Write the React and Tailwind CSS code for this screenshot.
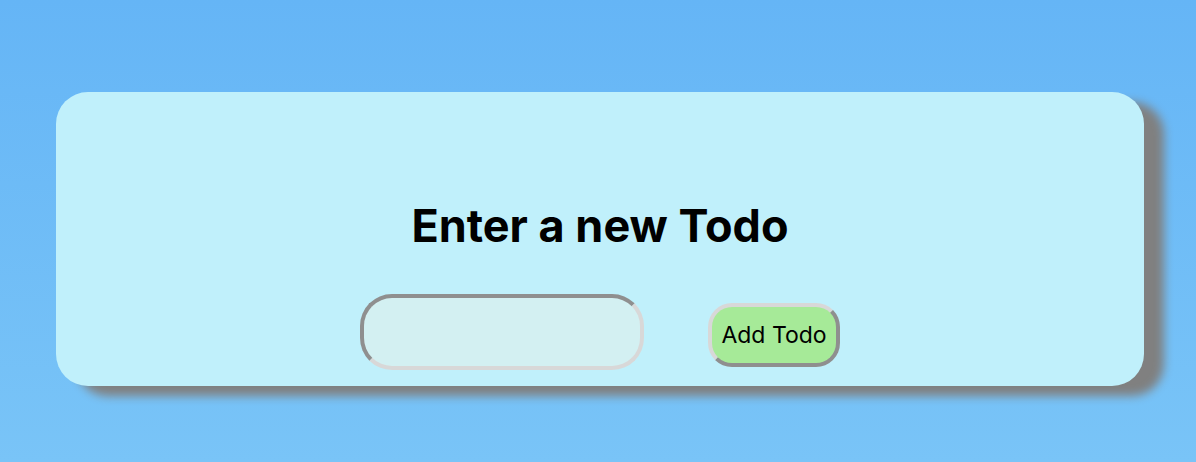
import { useState } from "react";

export default function App() {
  const [text, setText] = useState("");
  return (
    <main className="min-h-screen bg-linear-to-b from-[#65b5f6] to-[#79c4f7] pt-[92px] pr-[52px] pb-[76px] pl-14 font-['Inter',sans-serif] text-black">
      <section className="flex flex-col items-center rounded-[32px] bg-[#c0f0fb] pt-[106px] pb-4 shadow-[20px_10px_10px_#808080]">
        <h1 className="text-[45px] leading-[56px] font-bold">Enter a new Todo</h1>
        <form className="mt-10 flex items-center gap-16" onSubmit={(e) => e.preventDefault()}>
          <input
            aria-label="New todo"
            value={text}
            onChange={(e) => setText(e.target.value)}
            className="h-[76px] w-[284px] rounded-[32px] border-4 border-t-[#8f8f8f] border-r-[#d8d8d8] border-b-[#d8d8d8] border-l-[#8f8f8f] bg-[#d3f0f2] px-4 text-2xl"
          />
          <button
            type="submit"
            className="mt-1.5 h-16 w-[132px] rounded-3xl border-4 border-t-[#d8d8d8] border-r-[#8f8f8f] border-b-[#8f8f8f] border-l-[#d8d8d8] bg-[#a6ea98] text-[23px] whitespace-nowrap"
          >
            Add Todo
          </button>
        </form>
      </section>
    </main>
  );
}
